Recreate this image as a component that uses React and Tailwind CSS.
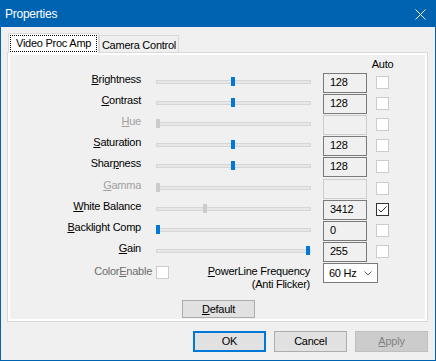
import React from "react";

const rows = [
  { label: "Brightness", key: 0, value: "128", thumb: 75, mode: "on" },
  { label: "Contrast", key: 0, value: "128", thumb: 75, mode: "on" },
  { label: "Hue", key: 0, value: "", thumb: 0, mode: "off" },
  { label: "Saturation", key: 0, value: "128", thumb: 75, mode: "on" },
  { label: "Sharpness", key: 4, value: "128", thumb: 75, mode: "on", tall: true },
  { label: "Gamma", key: 0, value: "", thumb: 0, mode: "off" },
  { label: "White Balance", key: 0, value: "3412", thumb: 47, mode: "auto" },
  { label: "Backlight Comp", key: 0, value: "0", thumb: 0, mode: "on" },
  { label: "Gain", key: 0, value: "255", thumb: 150, mode: "on" },
];

const Mnemonic = ({ text, at }) => (
  <>
    {text.slice(0, at)}
    <span className="underline underline-offset-[1px]">{text[at]}</span>
    {text.slice(at + 1)}
  </>
);

const CheckBox = ({ checked, className = "" }) => (
  <div
    className={`w-[13px] h-[13px] bg-white border flex items-center justify-center ${
      checked ? "border-[#333333]" : "border-[#cccccc]"
    } ${className}`}
  >
    {checked && (
      <svg width="11" height="11" viewBox="0 0 11 11">
        <polyline points="1.5,5.5 4,8 9.5,2.5" fill="none" stroke="#333333" strokeWidth="1" />
      </svg>
    )}
  </div>
);

const SliderRow = ({ row }) => {
  const off = row.mode === "off";
  return (
    <div className={`flex items-start ${row.tall ? "h-[22px]" : "h-[21px]"}`}>
      <div
        className={`w-[131px] text-right leading-[13px] ${
          off ? "text-[#a0a0a0]" : "text-black"
        }`}
      >
        <Mnemonic text={row.label} at={row.key} />
      </div>
      <div className="relative ml-[15px] w-[155px] h-[13px]">
        <div className="absolute left-0 right-0 top-[7px] h-[4px] border border-[#d6d6d6] bg-[#e7e7e7]" />
        <div
          className={`absolute top-[4px] w-[4px] h-[9px] ${
            row.mode === "on" ? "bg-[#0078d7]" : "bg-[#cccccc]"
          }`}
          style={{ left: row.thumb }}
        />
      </div>
      <div
        className={`ml-[12px] w-[44px] h-[20px] border bg-[#f0f0f0] pl-[6px] pt-[2px] leading-[13px] ${
          off ? "border-[#cccccc]" : "border-[#7a7a7a]"
        }`}
      >
        {row.value}
      </div>
      <CheckBox checked={row.mode === "auto"} className="ml-[9px] mt-[3px]" />
    </div>
  );
};

const Button = ({ children, className = "" }) => (
  <button
    className={`w-[73px] flex items-center justify-center leading-[13px] ${className}`}
  >
    {children}
  </button>
);

export default function App() {
  return (
    <div className="w-[436px] h-[361px] bg-[#0063b1] px-[1px] pb-[1px] flex flex-col font-['Liberation_Sans',Arial,sans-serif] text-[11px] tracking-[-0.25px] text-black select-none">
      <div className="h-[27px] flex items-start justify-between pl-[4px] pr-[9px] text-white">
        <span className="pt-[7px] text-[12px] leading-[14px]">Properties</span>
        <svg width="11" height="11" viewBox="0 0 11 11" className="mt-[9px]">
          <path d="M0.5 0.5 L10.5 10.5 M10.5 0.5 L0.5 10.5" stroke="#ffffff" strokeWidth="1" />
        </svg>
      </div>

      <div className="flex-1 bg-[#f0f0f0] px-[6px] pt-[6px] flex flex-col">
        <div className="flex h-[19px] pl-[1px]">
          <div className="relative z-10 h-[20px] w-[91px] bg-white border border-b-0 border-[#d9d9d9] p-[1px]">
            <div className="h-[17px] border border-dotted border-black pl-[5px] pt-[1px] leading-[13px]">
              Video Proc Amp
            </div>
          </div>
          <div className="mt-[2px] h-[17px] w-[80px] bg-[#f0f0f0] border border-b-0 border-[#d9d9d9] flex justify-center pt-[3px] leading-[13px]">
            Camera Control
          </div>
        </div>

        <div className="w-[421px] h-[270px] border border-[#d9d9d9] bg-white p-[2px]">
          <div className="h-full bg-[#f0f0f0] flex flex-col">
            <div className="flex pt-[3px] pl-[366px] h-[18px]">
              <div className="w-[13px] flex justify-center leading-[13px]">Auto</div>
            </div>

            {rows.map((row) => (
              <SliderRow key={row.label} row={row} />
            ))}

            <div className="flex items-start h-[28px]">
              <div className="w-[142px] text-right pt-[2px] leading-[13px] text-[#6d6d6d]">
                Color<Mnemonic text="Enable" at={0} />
              </div>
              <CheckBox className="ml-[4px] mt-[3px]" />
              <div className="w-[141px] text-right pt-[2px] leading-[13px]">
                <div>
                  <Mnemonic text="PowerLine Frequency" at={0} />
                </div>
                <div>(Anti Flicker)</div>
              </div>
              <div className="ml-[13px] w-[55px] h-[20px] border border-[#7a7a7a] bg-white flex items-center justify-between pl-[5px] pr-[5px] leading-[13px]">
                <span>60 Hz</span>
                <svg width="8" height="5" viewBox="0 0 8 5">
                  <polyline points="0.5,0.5 4,4 7.5,0.5" fill="none" stroke="#606060" strokeWidth="1" />
                </svg>
              </div>
            </div>

            <div className="pt-[9px] pl-[172px]">
              <Button className="h-[18px] border border-[#adadad] bg-[#e1e1e1]">
                <Mnemonic text="Default" at={0} />
              </Button>
            </div>
          </div>
        </div>

        <div className="flex justify-end gap-[8px] pr-[1px] mt-[9px]">
          <Button className="h-[21px] border-2 border-[#0078d7] bg-[#e1e1e1]">OK</Button>
          <Button className="h-[21px] border border-[#adadad] bg-[#e1e1e1]">Cancel</Button>
          <Button className="h-[21px] border border-[#bfbfbf] bg-[#cccccc] text-[#838383]">
            <Mnemonic text="Apply" at={0} />
          </Button>
        </div>
      </div>
    </div>
  );
}
